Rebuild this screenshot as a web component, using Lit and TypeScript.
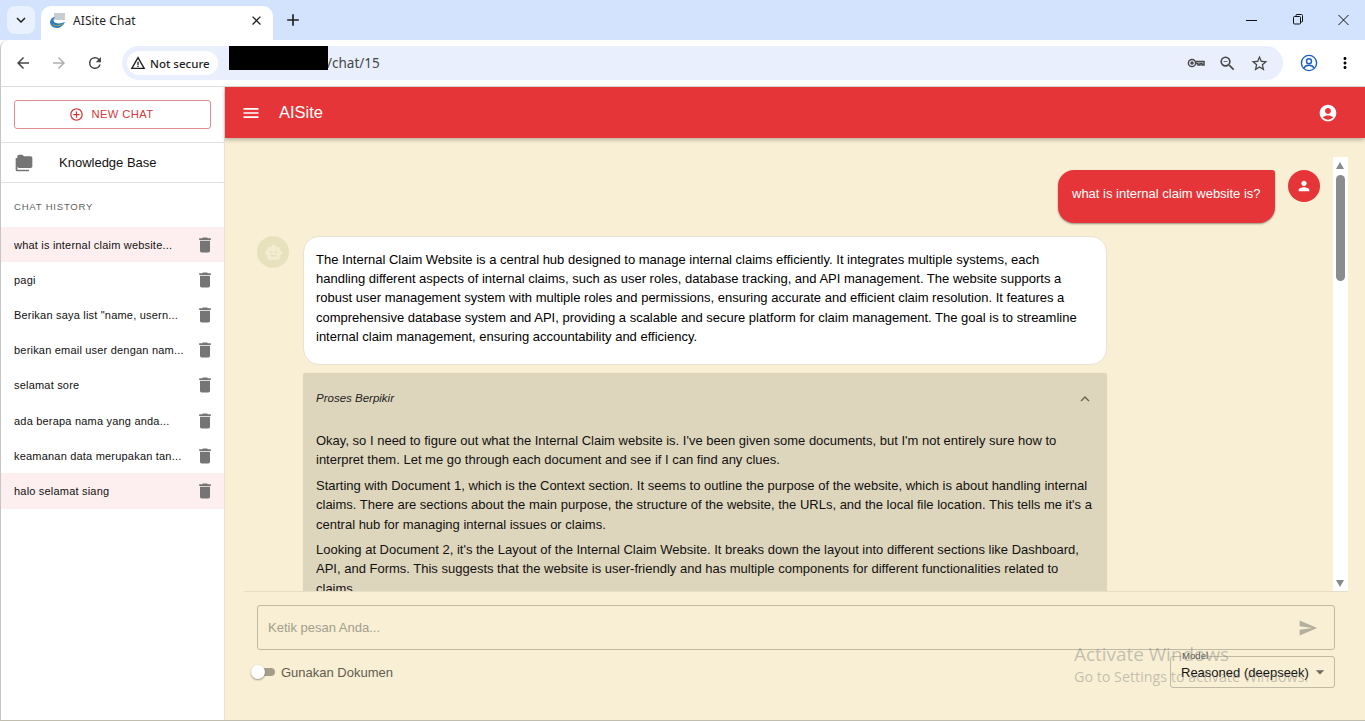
import { LitElement, html, css } from "lit";
import { customElement } from "lit/decorators.js";

const ic = (d: string, size = 24, cls = "") => html`<svg class=${cls} width=${size} height=${size} viewBox="0 0 24 24" fill="currentColor"><path d=${d}></path></svg>`;
const TRASH = "M6 19c0 1.1.9 2 2 2h8c1.1 0 2-.9 2-2V7H6v12zM19 4h-3.5l-1-1h-5l-1 1H5v2h14V4z";
const ACCOUNT = "M12 2C6.48 2 2 6.48 2 12s4.48 10 10 10 10-4.48 10-10S17.52 2 12 2zm0 4c1.93 0 3.5 1.57 3.5 3.5S13.93 13 12 13s-3.5-1.57-3.5-3.5S10.07 6 12 6zm0 14c-2.03 0-4.43-.82-6.14-2.88C7.55 15.8 9.68 15 12 15s4.45.8 6.14 2.12C16.43 19.18 14.03 20 12 20z";
const history = ["what is internal claim website...", "pagi", 'Berikan saya list "name, usern...', "berikan email user dengan nam...", "selamat sore", "ada berapa nama yang anda...", "keamanan data merupakan tan...", "halo selamat siang"];

@customElement("app-root")
export class AppRoot extends LitElement {
  static styles = css`
    :host { display: flex; flex-direction: column; width: 1365px; height: 721px; overflow: hidden; font-family: "Liberation Sans", Arial, sans-serif; color: #000; background: #fff; position: relative; }
    .tabstrip { height: 40px; background: #d3e3fd; display: flex; align-items: flex-start; flex: none; position: relative; }
    .tabsearch { width: 28px; height: 28px; margin: 6px 0 0 7px; border-radius: 8px; background: #e9f0fe; display: flex; align-items: center; justify-content: center; color: #1f1f1f; }
    .tab { width: 232px; height: 34px; margin: 6px 0 0 6px; background: #fff; border-radius: 10px 10px 0 0; display: flex; align-items: center; padding: 0 9px 6px 8px; box-sizing: border-box; font: 12px "Noto Sans", sans-serif; color: #1f1f1f; }
    .fav { width: 17px; height: 17px; margin-right: 7px; flex: none; }
    .tabtitle { flex: 1; letter-spacing: .1px; }
    .plus { margin: 10px 0 0 10px; color: #1f1f1f; display: flex; }
    .winctl { margin-left: auto; display: flex; gap: 30px; padding: 10px 13px 0 0; color: #111; }
    .toolbar { height: 47px; box-sizing: border-box; background: #fff; border-bottom: 1px solid #dcdcdc; border-left: 1px solid #c8c8c8; display: flex; align-items: center; flex: none; padding-bottom: 2px; padding-top: 2px; border-radius: 8px 8px 0 0; }
    .nav { display: flex; gap: 18px; margin-left: 13px; color: #474747; align-items: center; }
    .nav .off { color: #b0b0b0; }
    .omni { margin-left: 18px; width: 1161px; height: 34px; background: #e9effd; border-radius: 17px; display: flex; align-items: center; box-sizing: border-box; padding: 0 14px 0 5px; position: relative; font: 14px "Noto Sans", sans-serif; }
    .secure { height: 24px; width: 91px; background: #fff; border-radius: 12px; display: flex; align-items: center; gap: 4px; box-sizing: border-box; padding-left: 3px; font-size: 11.5px; font-weight: 500; color: #1f1f1f; flex: none; }
    .black { position: absolute; left: 107px; top: 0; width: 99px; height: 24px; background: #000; }
    .url { margin-left: 109px; color: #474747; font-size: 13.5px; }
    .omni-icons { margin-left: auto; display: flex; gap: 13px; color: #474747; align-items: center; }
    .tb-right { margin-left: 17px; display: flex; gap: 18px; align-items: center; }
    .page { flex: 1; display: flex; min-height: 0; border-left: 1px solid #c4c4c4; border-bottom: 1px solid #c0bcae; }
    .side { width: 223px; flex: none; background: #fff; border-right: 1px solid #e8e3d0; display: flex; flex-direction: column; }
    .newwrap { padding: 13px 13px 13px; border-bottom: 1px solid #e0e0e0; }
    .newbtn { height: 29px; box-sizing: border-box; border: 1px solid #e08d8f; border-radius: 3px; color: #d0393c; display: flex; align-items: center; justify-content: center; gap: 7px; font-size: 11.2px; letter-spacing: .4px; padding: 0 2px 1px 0; }
    .kb { height: 39px; border-bottom: 1px solid #e0e0e0; display: flex; align-items: center; padding-left: 13px; font-size: 13px; color: #111; }
    .kb svg { color: #757575; margin-right: 25px; }
    .hist-h { padding: 18px 13px 0; height: 26px; font-size: 9.6px; letter-spacing: .75px; color: #5f5f5f; line-height: 11px; }
    .item { height: 35.2px; display: flex; align-items: center; padding-left: 13px; padding-right: 9px; font-size: 11px; color: #111; }
    .item.on { background: #fdeff0; }
    .item span { flex: 1; white-space: nowrap; overflow: hidden; letter-spacing: .2px; }
    .item svg { color: #757575; flex: none; }
    .main { flex: 1; min-width: 0; background: #f8efd4; display: flex; flex-direction: column; }
    .appbar { height: 51px; background: #e53538; color: #fff; display: flex; align-items: center; padding: 0 27px 0 16px; box-shadow: 0 2px 4px rgba(0,0,0,.25); flex: none; position: relative; font-size: 16.5px; }
    .title { margin-left: 18px; flex: 1; }
    .body { height: 434px; flex: none; margin: 0 17px 0 19px; padding-top: 19px; border-bottom: 1px solid #e5dfc7; display: flex; position: relative; box-sizing: content-box; }
    .scrollarea { flex: 1; min-width: 0; height: 434px; overflow: hidden; }
    .sb { width: 15px; flex: none; height: 434px; background: #fff; position: relative; }
    .sb .up, .sb .down { position: absolute; left: 3px; width: 0; height: 0; border-left: 4.5px solid transparent; border-right: 4.5px solid transparent; }
    .sb .up { top: 5px; border-bottom: 7px solid #8a8a8a; }
    .sb .down { bottom: 4px; border-top: 7px solid #8a8a8a; }
    .sb .thumb { position: absolute; left: 3px; width: 9px; top: 18px; height: 106px; background: #8c8c8c; border-radius: 5px; }
    .rowuser { display: flex; justify-content: flex-end; padding: 13px 13px 0 0; }
    .ububble { width: 217px; height: 53px; box-sizing: border-box; background: #e53538; color: #fff; border-radius: 16px 3px 16px 16px; font-size: 13px; display: flex; padding: 16px 0 0 14px; line-height: 15px; box-shadow: 0 1px 2px rgba(0,0,0,.4); }
    .uav { width: 32px; height: 32px; border-radius: 50%; background: #e53538; color: #fff; margin-left: 13px; display: flex; align-items: center; justify-content: center; }
    .rowbot { display: flex; margin-top: 13px; padding-left: 13px; }
    .bav { width: 32px; height: 32px; border-radius: 50%; background: #e8e1bd; color: #f3ecd0; margin-right: 14px; flex: none; display: flex; align-items: center; justify-content: center; }
    .col { width: 804px; flex: none; }
    .bbubble { box-sizing: border-box; background: #fff; border: 1px solid #e8e3d0; border-radius: 16px; padding: 12.5px 21px 12px 12px; font-size: 13px; line-height: 19.4px; height: 129px; }
    .think { margin-top: 8px; background: #ded6bc; border-radius: 3px; padding: 0 13px; box-shadow: 0 0 1px rgba(0,0,0,.15); height: 300px; font-size: 13px; line-height: 19.4px; color: #111; }
    .thead { height: 58px; padding-bottom: 6px; box-sizing: border-box; display: flex; align-items: center; justify-content: space-between; font-style: italic; font-size: 11.5px; color: #222; }
    .thead svg { color: #6b6653; }
    .think p { margin: 0 0 6px; }
    .inputrow { padding: 13px 30px 0 32px; }
    .field { height: 45px; box-sizing: border-box; border: 1px solid #c1baa3; border-radius: 3px; display: flex; align-items: center; justify-content: space-between; padding: 0 16px 0 10px; font-size: 13px; color: #a39e8d; }
    .field svg { color: #b4b09f; }
    .ctl { display: flex; align-items: center; padding: 6px 30px 0 26px; position: relative; }
    .sw { width: 24px; height: 14px; position: relative; flex: none; margin-right: 6px; }
    .sw i { position: absolute; left: 4px; top: 3px; width: 20px; height: 8px; border-radius: 4px; background: #a39d8a; }
    .sw b { position: absolute; left: 0; top: 0; width: 14px; height: 14px; border-radius: 50%; background: #fff; box-shadow: 0 1px 2px rgba(0,0,0,.4); }
    .swl { font-size: 13px; color: #615d50; flex: 1; }
    .select { width: 165px; height: 32px; box-sizing: border-box; border: 1px solid #c1baa3; border-radius: 3px; position: relative; display: flex; align-items: center; font-size: 13px; padding: 0 4px 0 10px; justify-content: space-between; color: #111; white-space: nowrap; }
    .legend { position: absolute; left: 10px; top: -7px; font-size: 9.6px; line-height: 11px; color: #555; background: #f8efd4; padding: 0 1px; }
    .select svg { color: #6d6a5c; flex: none; }
    .wm { position: absolute; left: 1074px; top: 642px; color: rgba(120,120,120,.42); font-family: "Open Sans", sans-serif; pointer-events: none; }
    .wm div:first-child { font-size: 18.9px; line-height: 24px; }
    .wm div:last-child { font-size: 14.3px; line-height: 22px; }
  `;

  render() {
    return html`
      <div class="tabstrip">
        <div class="tabsearch">${ic("M7.41 8.59 12 13.17l4.59-4.58L18 10l-6 6-6-6z", 18)}</div>
        <div class="tab">
          <svg class="fav" viewBox="0 0 17 17"><rect x="5" y="1" width="11" height="7" fill="#c9cdd2"></rect><path d="M1 10c1-4 3-5 5-5-2 2-2 5 1 6 3 1 6 0 9-1-2 4-5 6-8 6-4 0-7-3-7-6z" fill="#2f7fb8"></path><path d="M3 12c3 2 8 2 12-1-2 2-4 3-6 3-3 0-5-1-6-2z" fill="#f0b429"></path></svg>
          <span class="tabtitle">AISite Chat</span>
          ${ic("M19 6.41 17.59 5 12 10.59 6.41 5 5 6.41 10.59 12 5 17.59 6.41 19 12 13.41 17.59 19 19 17.59 13.41 12z", 15)}
        </div>
        <div class="plus">${ic("M19 13h-6v6h-2v-6H5v-2h6V5h2v6h6z", 20)}</div>
        <div class="winctl">
          <svg width="16" height="20" viewBox="0 0 16 20" fill="none" stroke="currentColor"><path d="M2 10.5h11"></path></svg>
          <svg width="16" height="20" viewBox="0 0 16 20" fill="none" stroke="currentColor"><rect x="3.5" y="6.5" width="7" height="7.5" rx="1"></rect><path d="M6 6V5.5a1 1 0 0 1 1-1h4.5a1 1 0 0 1 1 1V11a1 1 0 0 1-1 1H11"></path></svg>
          <svg width="16" height="20" viewBox="0 0 16 20" fill="none" stroke="currentColor"><path d="M2.5 5l10 10M12.5 5l-10 10"></path></svg>
        </div>
      </div>
      <div class="toolbar">
        <div class="nav">
          ${ic("M20 11H7.83l5.59-5.59L12 4l-8 8 8 8 1.41-1.41L7.83 13H20z", 18)}
          ${ic("M12 4l-1.41 1.41L16.17 11H4v2h12.17l-5.58 5.59L12 20l8-8z", 18, "off")}
          ${ic("M17.65 6.35A7.96 7.96 0 0 0 12 4a8 8 0 1 0 7.73 10h-2.08A6 6 0 1 1 12 6c1.66 0 3.14.69 4.22 1.78L13 11h7V4l-2.35 2.35z", 18)}
        </div>
        <div class="omni">
          <div class="secure">${ic("M1 21h22L12 2 1 21zm3.47-2L12 6l7.53 13H4.47zM11 16h2v2h-2zm0-6h2v5h-2z", 16)}<span>Not secure</span></div>
          <div class="black"></div>
          <span class="url">/chat/15</span>
          <div class="omni-icons">
            <svg width="18" height="18" viewBox="0 0 18 18" fill="none" stroke="currentColor" stroke-width="1.5"><circle cx="5" cy="9" r="3.6"></circle><circle cx="5" cy="9" r="1" fill="currentColor"></circle><path d="M8.6 7.5H17V11h-2V9.5h-2V11h-2V9.5H8.6"></path></svg>
            ${ic("M15.5 14h-.79l-.28-.27A6.47 6.47 0 0 0 16 9.5 6.5 6.5 0 1 0 9.5 16c1.61 0 3.09-.59 4.23-1.57l.27.28v.79l5 4.99L20.49 19l-4.99-5zm-6 0C7.01 14 5 11.99 5 9.5S7.01 5 9.5 5 14 7.01 14 9.5 11.99 14 9.5 14zM7 9h5v1H7z", 19)}
            ${ic("M22 9.24l-7.19-.62L12 2 9.19 8.63 2 9.24l5.46 4.73L5.82 21 12 17.27 18.18 21l-1.63-7.03L22 9.24zM12 15.4l-3.76 2.27 1-4.28-3.32-2.88 4.38-.38L12 6.1l1.71 4.04 4.38.38-3.32 2.88 1 4.28L12 15.4z", 19)}
          </div>
        </div>
        <div class="tb-right">
          <svg width="18" height="18" viewBox="0 0 18 18" fill="none" stroke="#1a5fc8" stroke-width="1.4"><circle cx="9" cy="9" r="7.6"></circle><circle cx="9" cy="7.2" r="2.5"></circle><path d="M3.8 14.2c1-2.2 3-3 5.2-3s4.2.8 5.2 3"></path></svg>
          ${ic("M12 8c1.1 0 2-.9 2-2s-.9-2-2-2-2 .9-2 2 .9 2 2 2zm0 2c-1.1 0-2 .9-2 2s.9 2 2 2 2-.9 2-2-.9-2-2-2zm0 6c-1.1 0-2 .9-2 2s.9 2 2 2 2-.9 2-2-.9-2-2-2z", 18)}
        </div>
      </div>
      <div class="page">
        <aside class="side">
          <div class="newwrap"><div class="newbtn">${ic("M13 7h-2v4H7v2h4v4h2v-4h4v-2h-4V7zm-1-5C6.49 2 2 6.49 2 12s4.49 10 10 10 10-4.49 10-10S17.51 2 12 2zm0 18c-4.41 0-8-3.59-8-8s3.59-8 8-8 8 3.59 8 8-3.59 8-8 8z", 15)}<span>NEW CHAT</span></div></div>
          <div class="kb">${ic("M4 6H2v14c0 1.1.9 2 2 2h14v-2H4V6zm16-2h-8l-2-2H6c-1.1 0-1.99.9-1.99 2L4 16c0 1.1.9 2 2 2h14c1.1 0 2-.9 2-2V6c0-1.1-.9-2-2-2z", 20)}<span>Knowledge Base</span></div>
          <div class="hist-h">CHAT HISTORY</div>
          <div>
            ${history.map((h, i) => html`<div class="item ${i === 0 || i === 7 ? "on" : ""}"><span>${h}</span>${ic(TRASH, 20)}</div>`)}
          </div>
        </aside>
        <main class="main">
          <div class="appbar">
            ${ic("M3 18h18v-2H3v2zm0-5h18v-2H3v2zm0-7v2h18V6H3z", 20)}
            <span class="title">AISite</span>
            ${ic(ACCOUNT, 20)}
          </div>
          <div class="body">
            <div class="scrollarea">
              <div class="rowuser">
                <div class="ububble">what is internal claim website is?</div>
                <div class="uav">${ic("M12 12c2.21 0 4-1.79 4-4s-1.79-4-4-4-4 1.79-4 4 1.79 4 4 4zm0 2c-2.67 0-8 1.34-8 4v2h16v-2c0-2.66-5.33-4-8-4z", 16)}</div>
              </div>
              <div class="rowbot">
                <div class="bav">${ic("M20 9V7c0-1.1-.9-2-2-2h-3c0-1.66-1.34-3-3-3S9 3.34 9 5H6c-1.1 0-2 .9-2 2v2c-1.66 0-3 1.34-3 3s1.34 3 3 3v4c0 1.1.9 2 2 2h12c1.1 0 2-.9 2-2v-4c1.66 0 3-1.34 3-3s-1.34-3-3-3zM7.5 11.5C7.5 10.67 8.17 10 9 10s1.5.67 1.5 1.5S9.83 13 9 13s-1.5-.67-1.5-1.5zM16 17H8v-2h8v2zm-1-4c-.83 0-1.5-.67-1.5-1.5S14.17 10 15 10s1.5.67 1.5 1.5S15.83 13 15 13z", 19)}</div>
                <div class="col">
                  <div class="bbubble">The Internal Claim Website is a central hub designed to manage internal claims efficiently. It integrates multiple systems, each handling different aspects of internal claims, such as user roles, database tracking, and API management. The website supports a robust user management system with multiple roles and permissions, ensuring accurate and efficient claim resolution. It features a comprehensive database system and API, providing a scalable and secure platform for claim management. The goal is to streamline internal claim management, ensuring accountability and efficiency.</div>
                  <div class="think">
                    <div class="thead"><span>Proses Berpikir</span>${ic("M7.41 15.41 12 10.83l4.59 4.58L18 14l-6-6-6 6z", 18)}</div>
                    <p>Okay, so I need to figure out what the Internal Claim website is. I've been given some documents, but I'm not entirely sure how to interpret them. Let me go through each document and see if I can find any clues.</p>
                    <p>Starting with Document 1, which is the Context section. It seems to outline the purpose of the website, which is about handling internal claims. There are sections about the main purpose, the structure of the website, the URLs, and the local file location. This tells me it's a central hub for managing internal issues or claims.</p>
                    <p>Looking at Document 2, it's the Layout of the Internal Claim Website. It breaks down the layout into different sections like Dashboard, API, and Forms. This suggests that the website is user-friendly and has multiple components for different functionalities related to claims.</p>
                  </div>
                </div>
              </div>
            </div>
            <div class="sb"><div class="up"></div><div class="thumb"></div><div class="down"></div></div>
          </div>
          <div class="inputrow">
            <div class="field"><span>Ketik pesan Anda...</span>${ic("M2.01 21 23 12 2.01 3 2 10l15 2-15 2z", 20)}</div>
          </div>
          <div class="ctl">
            <div class="sw"><i></i><b></b></div>
            <span class="swl">Gunakan Dokumen</span>
            <div class="select"><span class="legend">Model</span><span>Reasoned (deepseek)</span>${ic("M7 10l5 5 5-5z", 20)}</div>
          </div>
        </main>
      </div>
      <div class="wm"><div>Activate Windows</div><div>Go to Settings to activate Windows.</div></div>
    `;
  }
}
